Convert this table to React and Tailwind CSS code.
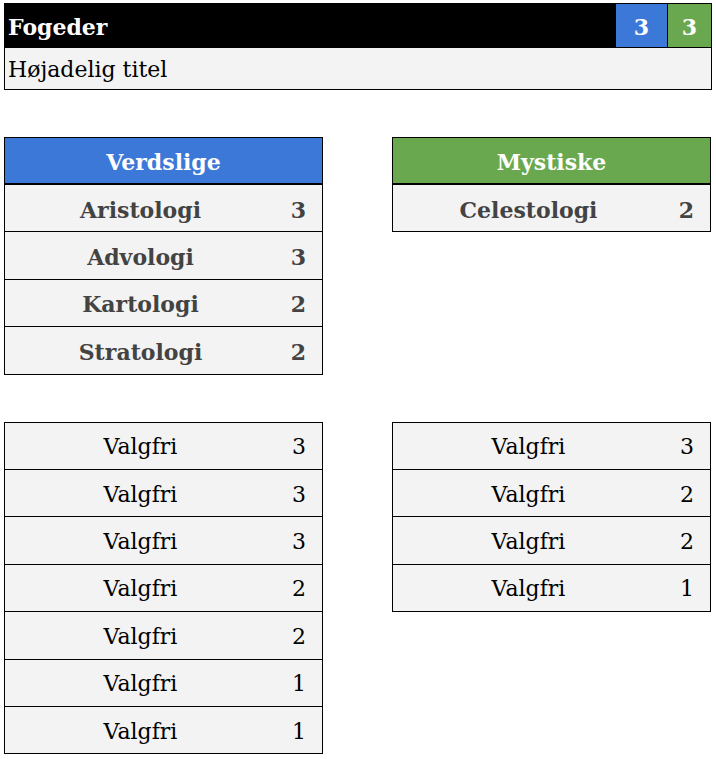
import React from "react";

const verdslige = [
  { name: "Aristologi", value: 3 },
  { name: "Advologi", value: 3 },
  { name: "Kartologi", value: 2 },
  { name: "Stratologi", value: 2 },
];

const mystiske = [{ name: "Celestologi", value: 2 }];

const valgfriLeft = [3, 3, 3, 2, 2, 1, 1];
const valgfriRight = [3, 2, 2, 1];

const Row = ({ name, value, bold }) => (
  <div className="flex h-[47.4px] items-center border-t border-black bg-[#f3f3f3] pt-[3px] first:h-[46.4px] first:border-t-0">
    <div
      className={
        bold
          ? "flex-1 text-center font-bold text-[#434343]"
          : "flex-1 text-center text-black"
      }
    >
      {name}
    </div>
    <div
      className={
        bold
          ? "w-[46px] pr-[16px] text-right font-bold text-[#434343]"
          : "w-[46px] pr-[16px] text-right text-black"
      }
    >
      {value}
    </div>
  </div>
);

const Table = ({ title, color, rows, bold }) => (
  <div className="w-[319px] border border-black">
    {title && (
      <div
        className={`flex h-[46px] items-center justify-center border-b border-black pt-[3px] font-bold text-white ${color}`}
      >
        {title}
      </div>
    )}
    {rows.map((r, i) => (
      <Row key={i} name={r.name} value={r.value} bold={bold} />
    ))}
  </div>
);

export default function App() {
  return (
    <div
      className="bg-white pl-[4px] pt-[3px] text-[22px] leading-none"
      style={{ fontFamily: '"DejaVu Serif", "Liberation Serif", serif' }}
    >
      <div className="w-[708px] border border-black">
        <div className="flex h-[43px] items-stretch bg-black pt-[2px] font-bold text-white">
          <div className="flex flex-1 items-center pl-[3px]">Fogeder</div>
          <div className="-mt-[2px] flex w-[51px] items-center justify-center bg-[#3c78d8] pt-[2px]">3</div>
          <div className="-mt-[2px] flex w-[44px] items-center justify-center border-l border-black bg-[#6aa84f] pt-[2px]">
            3
          </div>
        </div>
        <div className="flex h-[42px] items-center border-t border-black bg-[#f3f3f3] pl-[3px] pt-[2px] text-black">
          Højadelig titel
        </div>
      </div>

      <div className="mt-[47px] flex items-start gap-[69px]">
        <Table title="Verdslige" color="bg-[#3c78d8]" rows={verdslige} bold />
        <Table title="Mystiske" color="bg-[#6aa84f]" rows={mystiske} bold />
      </div>

      <div className="mt-[47px] flex items-start gap-[69px]">
        <Table rows={valgfriLeft.map((v) => ({ name: "Valgfri", value: v }))} />
        <Table rows={valgfriRight.map((v) => ({ name: "Valgfri", value: v }))} />
      </div>
    </div>
  );
}
